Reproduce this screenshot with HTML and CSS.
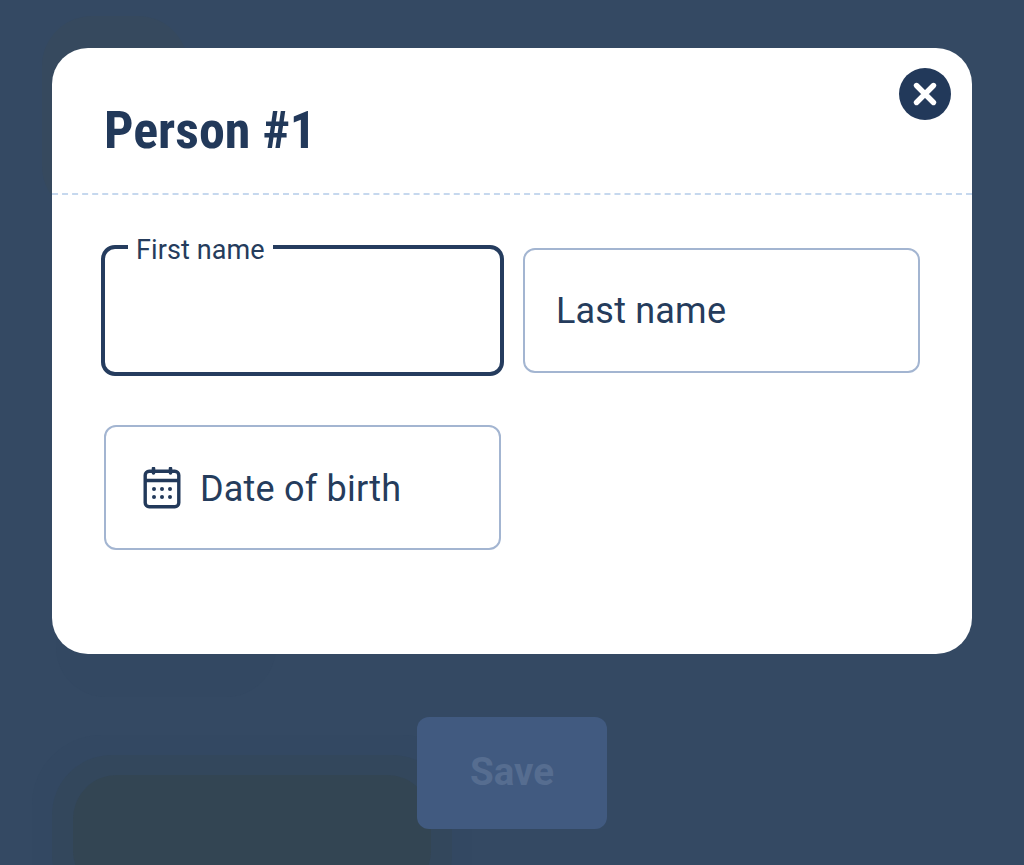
FILE: index.html
```html
<!DOCTYPE html>
<html lang="en">
<head>
<meta charset="utf-8">
<title>Person #1</title>
<link rel="stylesheet" href="styles.css">
</head>
<body>
<div class="backdrop">
  <div class="blob blob-top"></div>
  <div class="blob blob-mid"></div>
  <div class="halo halo-outer"></div>
  <div class="halo halo-inner"></div>
  <div class="blob blob-pill"></div>
  <button class="save" type="button">Save</button>
</div>
<section class="modal">
  <header class="modal-head">
    <h1 class="title">Person #1</h1>
    <button class="close" type="button" aria-label="Close">
      <svg viewBox="0 0 52 52" width="52" height="52"><circle cx="26" cy="26" r="26" fill="#22395a"/><path d="M17.5 17.5 34.5 34.5M34.5 17.5 17.5 34.5" stroke="#fff" stroke-width="5.4" stroke-linecap="round"/></svg>
    </button>
  </header>
  <div class="form">
    <div class="field field-focus">
      <span class="float-label">First name</span>
    </div>
    <div class="field field-last"><span class="placeholder">Last name</span></div>
    <div class="field field-date">
      <svg class="cal" viewBox="0 0 40 42" width="40" height="42" fill="none"><rect x="3.2" y="4.2" width="33.6" height="35.6" rx="4" stroke="#22395a" stroke-width="3.4"/><path d="M3 13.5H37" stroke="#22395a" stroke-width="3.4"/><path d="M11.5 1.5V6M28.5 1.5V6" stroke="#22395a" stroke-width="3.6" stroke-linecap="round"/><g fill="#22395a"><circle cx="12" cy="22" r="2"/><circle cx="20" cy="22" r="2"/><circle cx="28" cy="22" r="2"/><circle cx="12" cy="30" r="2"/><circle cx="20" cy="30" r="2"/><circle cx="28" cy="30" r="2"/></g></svg>
      <span class="placeholder">Date of birth</span>
    </div>
  </div>
</section>
</body>
</html>
```

FILE: styles.css
```css
* { box-sizing: border-box; }
html, body { margin: 0; height: 100%; }
body {
  position: relative;
  width: 1024px;
  height: 865px;
  overflow: hidden;
  background: #344963;
  font-family: Roboto, "Liberation Sans", sans-serif;
  color: #253c5c;
}
.backdrop { position: absolute; inset: 0; overflow: hidden; }
.blob, .halo { position: absolute; }
.blob-top { left: 42px; top: 16px; width: 146px; height: 200px; border-radius: 50px; background: #36495e; }
.blob-mid { left: 56px; top: 500px; width: 220px; height: 197px; border-radius: 50px; background: #334862; }
.halo-outer { left: 32px; top: 735px; width: 440px; height: 200px; border-radius: 70px; background: #334862; }
.halo-inner { left: 52px; top: 755px; width: 400px; height: 160px; border-radius: 60px; background: #33475c; }
.blob-pill { left: 73px; top: 775px; width: 358px; height: 120px; border-radius: 44px; background: #334553; }
.save {
  position: absolute;
  left: 417px;
  top: 717px;
  width: 190px;
  height: 112px;
  padding: 0 0 3px;
  border: 0;
  border-radius: 12px;
  background: #415a80;
  color: #566d90;
  font-family: Roboto, sans-serif;
  font-weight: 700;
  font-size: 38.5px;
}
.modal {
  position: absolute;
  left: 52px;
  top: 48px;
  width: 920px;
  height: 606px;
  background: #fff;
  border-radius: 36px;
}
.modal-head {
  position: relative;
  height: 147px;
  padding: 51px 52px 0;
  border-bottom: 2px dashed #c6d8ee;
}
.title {
  margin: 0;
  font-size: 52px;
  line-height: 64px;
  font-weight: 700;
  font-stretch: 75%;
  color: #22395a;
}
.close {
  position: absolute;
  right: 21px;
  top: 20px;
  width: 52px;
  height: 52px;
  padding: 0;
  border: 0;
  background: none;
  line-height: 0;
}
.form {
  display: grid;
  grid-template-columns: 397px 397px;
  column-gap: 22px;
  row-gap: 52px;
  padding: 53px 0 0 52px;
}
.field {
  position: relative;
  display: flex;
  align-items: center;
  height: 125px;
  padding: 0 31px;
  border: 2px solid #a3b5d1;
  border-radius: 12px;
}
.field-focus {
  margin: -3px;
  height: 131px;
  border: 4px solid #253c5e;
  border-radius: 14px;
}
.field-date { gap: 18px; padding-left: 36px; }
.placeholder { position: relative; top: 1px; font-size: 36px; line-height: 42px; letter-spacing: 0.2px; color: #253c5c; }
.field-last .placeholder { top: 0; }
.cal { flex: none; }
.float-label {
  position: absolute;
  left: 23px;
  top: -14px;
  padding: 0 8px;
  background: #fff;
  font-size: 27px;
  line-height: 30px;
  letter-spacing: 0.1px;
  color: #253c5c;
}
```
